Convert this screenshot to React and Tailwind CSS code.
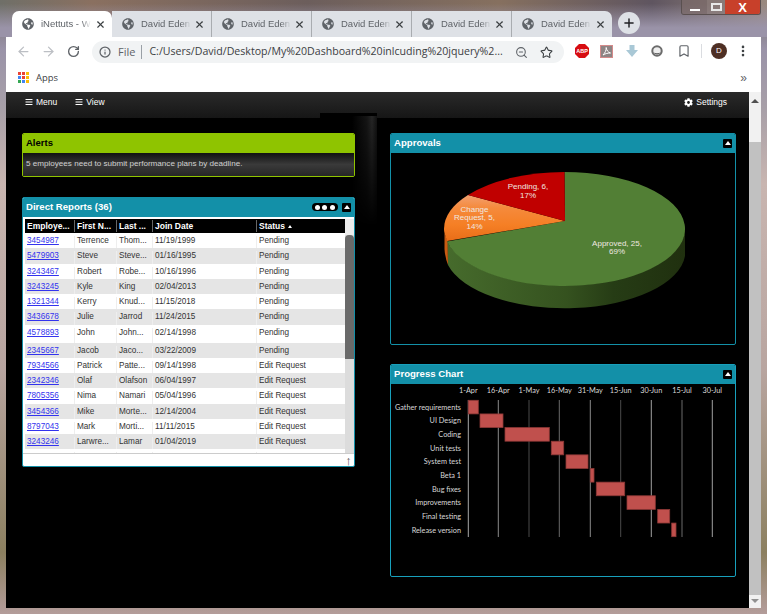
import React from 'react';
import { ArrowLeft, ArrowRight, RotateCw, Info, ZoomOut, Star, Bookmark, MoreVertical, Plus, X } from 'lucide-react';
import { FaGlobeAmericas, FaBars, FaCog } from 'react-icons/fa';

const reports = [
  ['3454987', 'Terrence', 'Thom...', '11/19/1999', 'Pending'],
  ['5479903', 'Steve', 'Steve...', '01/16/1995', 'Pending'],
  ['3243467', 'Robert', 'Robe...', '10/16/1996', 'Pending'],
  ['3243245', 'Kyle', 'King', '02/04/2013', 'Pending'],
  ['1321344', 'Kerry', 'Knud...', '11/15/2018', 'Pending'],
  ['3436678', 'Julie', 'Jarrod', '11/24/2015', 'Pending'],
  ['4578893', 'John', 'John...', '02/14/1998', 'Pending'],
  ['2345667', 'Jacob', 'Jaco...', '03/22/2009', 'Pending'],
  ['7934566', 'Patrick', 'Patte...', '09/14/1998', 'Edit Request'],
  ['2342346', 'Olaf', 'Olafson', '06/04/1997', 'Edit Request'],
  ['7805356', 'Nima', 'Namari', '05/04/1996', 'Edit Request'],
  ['3454366', 'Mike', 'Morte...', '12/14/2004', 'Edit Request'],
  ['8797043', 'Mark', 'Morti...', '11/11/2015', 'Edit Request'],
  ['3243246', 'Larwre...', 'Lamar', '01/04/2019', 'Edit Request'],
  ['', '', '', '', ''],
];

const ganttDates = ['1-Apr', '16-Apr', '1-May', '16-May', '31-May', '15-Jun', '30-Jun', '15-Jul', '30-Jul'];
const ganttLines = [
  [468.3, '#a8a8a8'], [498.3, '#8a8a8a'], [529, '#4a4a4a'], [559.3, '#6a6a6a'], [590.3, '#8a8a8a'],
  [620.7, '#4a4a4a'], [651.3, '#a0a0a0'], [682, '#6a6a6a'], [712.3, '#a0a0a0'],
];
const ganttTasks = [
  ['Gather requirements', 468.3, 478.3],
  ['UI Design', 480, 503],
  ['Coding', 505, 549.3],
  ['Unit tests', 551.3, 563.7],
  ['System test', 566, 588],
  ['Beta 1', 590.3, 594],
  ['Bug fixes', 596.3, 624.7],
  ['Improvements', 627, 655.3],
  ['Final testing', 657.7, 669.7],
  ['Release version', 671.7, 676],
];

function Tab({ title, active, last }) {
  return (
    <div className={`flex h-[26px] w-[100px] items-center pl-[10px] pr-[6px] ${active ? 'rounded-t-[7px] bg-white' : 'bg-[#dee1e6]'} ${!active && !last ? 'border-r border-[#a9acb0]' : ''} ${last ? 'rounded-tr-[7px]' : ''}`}>
      <FaGlobeAmericas className="h-[12px] w-[12px] shrink-0 text-[#5f6368]" />
      <span className="ml-[7px] w-[50px] overflow-hidden whitespace-nowrap text-[9.5px] text-[#5f6368] [mask-image:linear-gradient(to_right,black_80%,transparent)]">{title}</span>
      <X className="ml-auto h-[11px] w-[11px] text-[#3c4043]" strokeWidth={2.5} />
    </div>
  );
}

function ToolIcon({ children, className = '' }) {
  return <div className={`flex h-[22px] w-[25px] shrink-0 items-center justify-center pb-[2px] ${className}`}>{children}</div>;
}

function Toggle() {
  return (
    <div className="flex h-[9px] w-[9px] items-center justify-center rounded-[1px] bg-black">
      <div className="h-0 w-0 border-x-[3px] border-b-[4px] border-x-transparent border-b-white" />
    </div>
  );
}

function PanelHead({ title, children }) {
  return (
    <div className="flex h-[20px] shrink-0 items-center justify-between rounded-t-[2px] bg-[#1390a8] pl-[4px] pr-[4px]">
      <span className="text-[9.6px] font-bold text-white">{title}</span>
      <div className="flex items-center gap-[4px]">
        {children}
        <Toggle />
      </div>
    </div>
  );
}

function ReportRow({ row, index }) {
  const tall = index === 6;
  const cell = 'h-full truncate border-l border-[#eeeeee] pl-[2px]';
  return (
    <div className={`flex shrink-0 items-start pt-[3px] text-[8.2px] leading-[10px] text-[#333333] ${tall ? 'h-[18px]' : 'h-[15.25px]'} ${index % 2 ? 'bg-[#e5e5e5]' : 'bg-white'}`}>
      <div className="h-full w-[49px] truncate pl-[2px]">
        <a href="#" className="text-[#3333ee] underline">{row[0]}</a>
      </div>
      <div className={`${cell} w-[42px]`}>{row[1]}</div>
      <div className={`${cell} w-[36px]`}>{row[2]}</div>
      <div className={`${cell} w-[104px]`}>{row[3]}</div>
      <div className={`${cell} w-[89px]`}>{row[4]}</div>
    </div>
  );
}

function PieChart() {
  return (
    <svg viewBox="391 154 344 190" className="h-[190px] w-[344px]">
      <defs>
        <linearGradient id="side" x1="0" x2="1" y1="0" y2="0">
          <stop offset="0" stopColor="#466b2c" />
          <stop offset="0.5" stopColor="#35521f" />
          <stop offset="0.7" stopColor="#263c15" />
          <stop offset="1" stopColor="#20300f" />
        </linearGradient>
        <linearGradient id="orange" x1="0" x2="0" y1="0" y2="1">
          <stop offset="0" stopColor="#f2a070" />
          <stop offset="0.28" stopColor="#f58a3c" />
          <stop offset="0.65" stopColor="#f57f25" />
          <stop offset="1" stopColor="#e86d18" />
        </linearGradient>
      </defs>
      <path d="M685 230 L685 257 A120.5 57 0 0 1 448 266 L447 242 A120.5 57 0 0 0 685 230 Z" fill="url(#side)" />
      <path d="M444.5 234 L447.5 242 L448 266 Q445 258 444.5 250 Z" fill="#c85a12" />
      <path d="M565 222 L564.5 173 A120.5 57 0 1 1 447 242.6 Z" fill="#527f35" />
      <path d="M565 222 L447 242 L444.5 234 Q444 232 444 230 A120.5 57 0 0 1 468 196 Z" fill="url(#orange)" />
      <path d="M565 222 L468 196 A120.5 57 0 0 1 564.5 173 Z" fill="#c00000" />
      <g fontFamily="'Liberation Sans', sans-serif" fontSize="8" fill="#f0e8e0" textAnchor="middle">
        <text x="528" y="190">Pending, 6,</text>
        <text x="528" y="198.5">17%</text>
        <text x="474.5" y="212.5">Change</text>
        <text x="474.5" y="221">Request, 5,</text>
        <text x="474.5" y="230">14%</text>
        <text x="617" y="246.5">Approved, 25,</text>
        <text x="617" y="255">69%</text>
      </g>
    </svg>
  );
}

function GanttChart() {
  return (
    <svg viewBox="391 385 344 191" className="h-[191px] w-[344px]">
      <g fontFamily="Lato, sans-serif" fontSize="7.3" fill="#d8d8d8">
        {ganttDates.map((d, i) => (
          <text key={d} x={ganttLines[i][0]} y="393.5" textAnchor="middle">{d}</text>
        ))}
        {ganttLines.map(([x, color]) => (
          <line key={x} x1={x} x2={x} y1="401" y2="538" stroke={color} strokeWidth="1" />
        ))}
        {ganttTasks.map(([name, from, to], i) => {
          const y = 401.3 + i * 13.64;
          return (
            <g key={name}>
              <text x="461" y={y + 9.5} textAnchor="end">{name}</text>
              <rect x={from} y={y} width={to - from} height="13.6" fill="#c0504d" stroke="#8c3836" strokeWidth="0.8" />
            </g>
          );
        })}
      </g>
    </svg>
  );
}

export default function App() {
  return (
    <div className="relative flex h-[614px] w-[767px] flex-col overflow-hidden bg-[linear-gradient(180deg,#6f6a66_0%,#9a93a8_8%,#a8a0a8_18%,#c8b5b0_30%,#b8a5a0_60%,#8c8060_90%,#b39c9a_100%)] px-[6px] pb-[6px] font-['Liberation_Sans',sans-serif]">
      {/* window controls */}
      <div className="absolute right-[6px] top-0 z-10 flex h-[15px] w-[80px] overflow-hidden rounded-b-[3px] border border-t-0 border-[#5a5050] text-white">
        <div className="flex w-[25px] items-end justify-center bg-[#7a6a68]/70 pb-[3px]"><div className="h-[2px] w-[10px] bg-white" /></div>
        <div className="flex w-[18px] items-center justify-center bg-[#8a7a78]/70"><div className="h-[8px] w-[11px] border-2 border-[#e8e8e8]" /></div>
        <div className="flex flex-1 items-center justify-center bg-[#c8402a] text-[13px] font-bold leading-none">X</div>
      </div>

      {/* tab strip */}
      <div className="-mx-[6px] flex h-[37px] shrink-0 items-end bg-[linear-gradient(180deg,transparent_10%,#9a93a8_75%),linear-gradient(90deg,#6f6f68,#8a7060_12%,#6c5e5c_40%,#86705f_65%,#5f5560_85%,#9a8a80)] pl-[12px]">
        <Tab title="iNettuts - W" active />
        <Tab title="David Eden" />
        <Tab title="David Eden" />
        <Tab title="David Eden" />
        <Tab title="David Eden" />
        <Tab title="David Eden" last />
        <div className="mb-[3px] ml-[6px] flex h-[22px] w-[22px] items-center justify-center rounded-full bg-[#dee1e6]">
          <Plus className="h-[14px] w-[14px] text-[#202124]" strokeWidth={2.5} />
        </div>
      </div>

      {/* toolbar */}
      <div className="flex h-[26px] shrink-0 items-center bg-white pl-[5px] pt-[4px]">
        <ToolIcon><ArrowLeft className="h-[15px] w-[15px] text-[#bcbfc4]" /></ToolIcon>
        <ToolIcon><ArrowRight className="h-[15px] w-[15px] text-[#bcbfc4]" /></ToolIcon>
        <ToolIcon><RotateCw className="h-[13px] w-[13px] text-[#5f6368]" strokeWidth={2.5} /></ToolIcon>
        <div className="ml-[6px] flex h-[22px] w-[472px] shrink-0 items-center rounded-full bg-[#f1f3f4] pl-[7px] text-[#3c4043]">
          <Info className="h-[12px] w-[12px] text-[#5f6368]" strokeWidth={2.5} />
          <span className="ml-[7px] font-['Open_Sans',sans-serif] text-[11px] text-[#5f6368]">File</span>
          <span className="ml-[6px] h-[14px] w-px bg-[#9aa0a6]" />
          <span className="ml-[7px] w-[354px] overflow-hidden whitespace-nowrap font-['Open_Sans',sans-serif] text-[10.6px]">C:/Users/David/Desktop/My%20Dashboard%20inlcuding%20jquery%2...</span>
          <ZoomOut className="ml-[12px] h-[13px] w-[13px] text-[#5f6368]" />
          <Star className="ml-[12px] h-[13px] w-[13px] text-[#3c4043]" />
        </div>
        <ToolIcon className="ml-[5px]">
          <svg viewBox="0 0 14 14" className="h-[14px] w-[14px]">
            <polygon points="4,0 10,0 14,4 14,10 10,14 4,14 0,10 0,4" fill="#d70d12" />
            <text x="7" y="9.2" textAnchor="middle" fontSize="5.5" fontWeight="bold" fill="#ffffff" fontFamily="'Liberation Sans', sans-serif">ABP</text>
          </svg>
        </ToolIcon>
        <ToolIcon>
          <svg viewBox="0 0 13 13" className="h-[13px] w-[13px]">
            <rect x="0.5" y="0.5" width="12" height="12" fill="#8d8484" stroke="#d48a8a" />
            <path d="M3 10 C5 8 6.5 5 6.2 2.5 C6.5 5 8 7.5 10.5 8 C8 8 5.5 8.5 3 10Z" fill="none" stroke="#ffffff" strokeWidth="1" />
          </svg>
        </ToolIcon>
        <ToolIcon>
          <svg viewBox="0 0 14 14" className="h-[14px] w-[14px]">
            <path d="M4.5 1 H9.5 V6 H13 L7 13 L1 6 H4.5 Z" fill="#a9c8d6" />
          </svg>
        </ToolIcon>
        <ToolIcon>
          <svg viewBox="0 0 12 12" className="h-[12px] w-[12px]">
            <circle cx="6" cy="6" r="4.7" fill="#eeeeee" stroke="#6b6b6b" strokeWidth="2" />
            <path d="M2 7 A4.5 4.5 0 0 0 10 7 A5 3 0 0 1 2 7Z" fill="#555555" />
          </svg>
        </ToolIcon>
        <ToolIcon className="ml-[2px]"><Bookmark className="h-[14px] w-[14px] text-[#5f6368]" /></ToolIcon>
        <div className="ml-[5px] mb-[2px] h-[14px] w-px bg-[#dadce0]" />
        <div className="mb-[2px] ml-[9px] flex h-[16px] w-[16px] shrink-0 items-center justify-center rounded-full bg-[#4e2f24] text-[8px] text-white">D</div>
        <MoreVertical className="mb-[2px] ml-[9px] h-[14px] w-[14px] text-[#3c4043]" strokeWidth={2.5} />
      </div>

      {/* bookmarks */}
      <div className="flex h-[29px] shrink-0 items-center justify-between bg-white pl-[12px] pr-[14px] pt-[1px]">
        <div className="flex items-center">
          <div className="grid h-[11px] w-[11px] grid-cols-3 gap-px">
            {['#ea4335', '#ea4335', '#fbbc05', '#4285f4', '#ea4335', '#fbbc05', '#34a853', '#4285f4', '#fbbc05'].map((c, i) => (
              <svg key={i} viewBox="0 0 3 3" className="h-[3px] w-[3px]"><rect width="3" height="3" fill={c} /></svg>
            ))}
          </div>
          <span className="ml-[7px] font-['Open_Sans',sans-serif] text-[9.4px] text-[#3c4043]">Apps</span>
        </div>
        <span className="text-[12px] leading-none text-[#5f6368]">»</span>
      </div>

      {/* page */}
      <div className="flex min-h-0 flex-1 bg-black">
        <div className="relative min-w-0 flex-1">
          <div className="flex h-[26px] items-center justify-between bg-[linear-gradient(180deg,#2a2a2a,#161616)] pb-[6px] pl-[19px] pr-[22px] text-[8.5px] text-white">
            <div className="flex items-center gap-[18px]">
              <span className="flex items-center gap-[3px]"><FaBars className="h-[8px] w-[8px]" />Menu</span>
              <span className="flex items-center gap-[3px]"><FaBars className="h-[8px] w-[8px]" />View</span>
            </div>
            <span className="flex items-center gap-[3px]"><FaCog className="h-[9px] w-[9px]" />Settings</span>
          </div>
          {/* dark band behind the columns */}
          <div className="absolute left-[314px] top-[21px] h-[5px] w-[57px] bg-black" />
          <div className="absolute left-[346px] top-[24px] h-[110px] w-[25px] bg-[linear-gradient(90deg,#000000,#151515_60%,#262626_80%,#111111)] [mask-image:linear-gradient(to_bottom,black,transparent)]" />

          <div className="relative flex gap-[35px] pl-[16px] pt-[15px]">
            <div className="flex w-[333px] flex-col gap-[20px]">
              <div className="flex h-[44px] flex-col overflow-hidden rounded-[2px] border border-[#8fc400]">
                <div className="flex h-[19px] shrink-0 items-center bg-[#8fc400] pl-[3px] text-[9.5px] font-bold text-black">Alerts</div>
                <div className="flex flex-1 items-center bg-[linear-gradient(180deg,#111111,#3a3a3a_50%,#262626)] pl-[3px] text-[8.1px] text-[#d0d0d0]">
                  5 employees need to submit performance plans by deadline.
                </div>
              </div>

              <div className="flex h-[270px] flex-col overflow-hidden rounded-[2px] border border-[#1390a8] bg-white">
                <div className="-mx-px -mt-px">
                  <PanelHead title="Direct Reports (36)">
                    <div className="flex h-[8px] w-[26px] items-center justify-around rounded-full bg-black px-[2px]">
                      <span className="h-[5px] w-[5px] rounded-full bg-white" />
                      <span className="h-[5px] w-[5px] rounded-full bg-white" />
                      <span className="h-[5px] w-[5px] rounded-full bg-white" />
                    </div>
                  </PanelHead>
                </div>
                <div className="flex min-h-0 flex-1 pt-[2px]">
                  <div className="ml-[2px] flex w-[320px] flex-col overflow-hidden">
                    <div className="relative z-10 flex h-[14px] shrink-0 items-center bg-black text-[8.5px] font-bold text-white">
                      <div className="w-[49px] pl-[2px]">Employe...</div>
                      <div className="w-[42px] border-l border-[#666666] pl-[2px]">First N...</div>
                      <div className="w-[36px] border-l border-[#666666] pl-[2px]">Last ...</div>
                      <div className="w-[104px] border-l border-[#666666] pl-[2px]">Join Date</div>
                      <div className="flex w-[89px] items-center gap-[3px] border-l border-[#666666] pl-[2px]">
                        Status
                        <span className="h-0 w-0 border-x-[2px] border-b-[3px] border-x-transparent border-b-white" />
                      </div>
                    </div>
                    <div className="flex flex-col">
                      {reports.map((row, i) => <ReportRow key={i} row={row} index={i} />)}
                    </div>
                  </div>
                  <div className="flex w-[9px] shrink-0 flex-col bg-[#dcdcdc]">
                    <div className="h-[16px] shrink-0 bg-[#ececec]" />
                    <div className="h-[124px] shrink-0 rounded-t-[4px] bg-[#6a6a6a]" />
                  </div>
                </div>
                <div className="flex h-[13px] shrink-0 items-center justify-end border-t border-[#cccccc] pr-[1px] text-[13px] leading-none text-[#555555]">
                  <span className="w-[9px] text-center">↑</span>
                </div>
              </div>
            </div>

            <div className="flex w-[346px] flex-col gap-[19px]">
              <div className="flex h-[212px] flex-col overflow-hidden rounded-[2px] border border-[#1390a8] bg-black">
                <div className="-mx-px -mt-px">
                  <PanelHead title="Approvals" />
                </div>
                <PieChart />
              </div>
              <div className="flex h-[213px] flex-col overflow-hidden rounded-[2px] border border-[#18a0bc] bg-black">
                <div className="-mx-px -mt-px">
                  <PanelHead title="Progress Chart" />
                </div>
                <GanttChart />
              </div>
            </div>
          </div>
        </div>

        {/* page scrollbar */}
        <div className="flex w-[12px] shrink-0 flex-col bg-[#f1f1f1]">
          <div className="flex h-[50px] shrink-0 justify-center pt-[7px]">
            <div className="h-0 w-0 border-x-[4px] border-b-[4px] border-x-transparent border-b-[#505050]" />
          </div>
          <div className="flex-1 bg-[#c1c1c1]" />
          <div className="flex h-[13px] shrink-0 justify-center pt-[4px]">
            <div className="h-0 w-0 border-x-[4px] border-t-[4px] border-x-transparent border-t-[#909090]" />
          </div>
        </div>
      </div>
    </div>
  );
}
